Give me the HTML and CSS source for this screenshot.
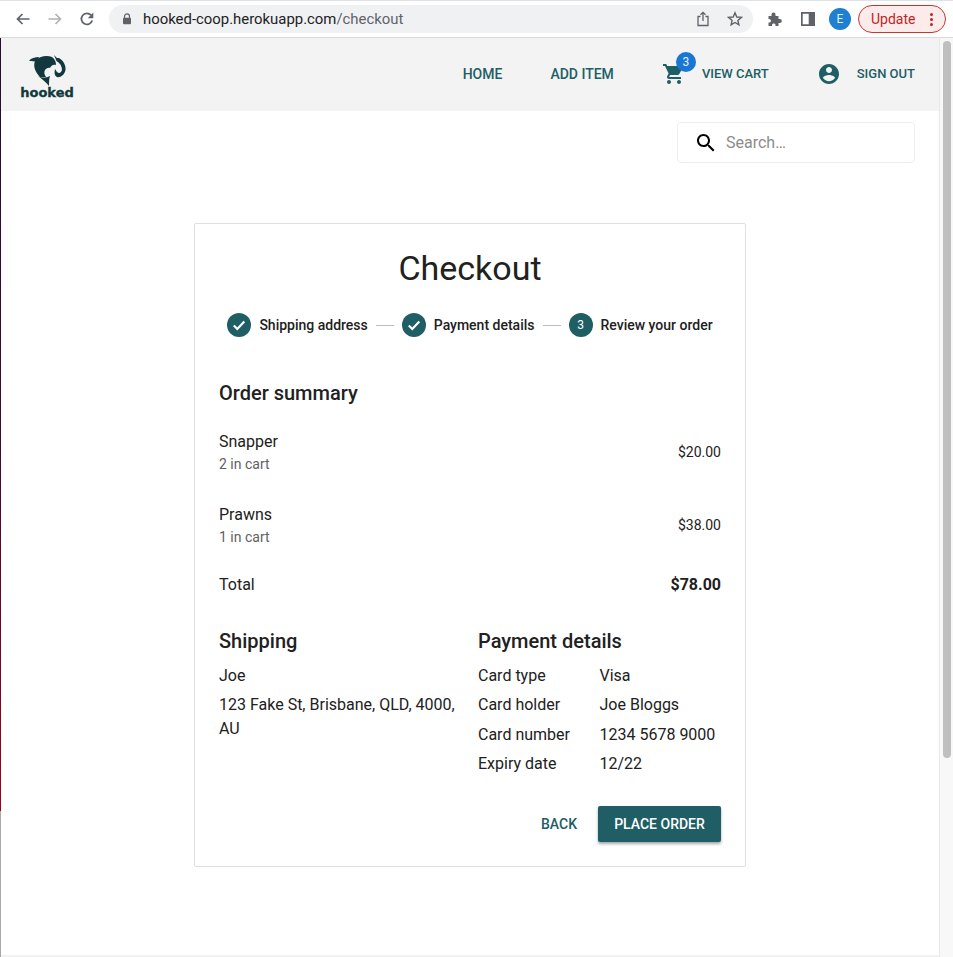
FILE: index.html
```html
<!DOCTYPE html>
<html lang="en">
<head>
<meta charset="utf-8">
<title>Hooked - Checkout</title>
<link rel="stylesheet" href="styles.css">
</head>
<body>
<div class="browser-bar">
  <div class="nav-icons">
    <svg class="b-icon" viewBox="0 0 16 16"><path d="M14.5 8H2.500M7.500 3 2.500 8l5 5" fill="none" stroke="#5f6368" stroke-width="1.700"/></svg>
    <svg class="b-icon" viewBox="0 0 16 16"><path d="M1.500 8h12M8.500 3l5 5-5 5" fill="none" stroke="#b1b3b6" stroke-width="1.700"/></svg>
    <svg class="b-icon" viewBox="0 0 16 16"><path d="M13.200 9.500A5.500 5.500 0 1 1 12 4.200" fill="none" stroke="#5f6368" stroke-width="1.800"/><path d="M14.300 1.600v5.600H8.700z" fill="#5f6368"/></svg>
  </div>
  <div class="omnibox">
    <svg class="lock" viewBox="0 0 10 12"><path d="M2.500 5V3.400a2.500 2.500 0 0 1 5 0V5" fill="none" stroke="#5f6368" stroke-width="1.200"/><rect x="1" y="4.800" width="8" height="6.400" rx="1" fill="#5f6368"/></svg>
    <span class="url">hooked-coop.herokuapp.com<span class="url-path">/checkout</span></span>
    <svg class="share" viewBox="0 0 14 16"><path d="M4.500 5.500H2v9h10v-9H9.500M7 10V1.500M4.500 3.800 7 1.300l2.500 2.500" fill="none" stroke="#5f6368" stroke-width="1.300"/></svg>
    <svg class="star" viewBox="0 0 16 16"><path d="m8 1.800 1.800 4.200 4.600.4-3.500 3 1 4.500L8 11.500l-3.900 2.400 1-4.500-3.500-3 4.600-.4z" fill="none" stroke="#5f6368" stroke-width="1.400"/></svg>
  </div>
  <div class="ext-icons">
    <svg class="puzzle" viewBox="0 0 16 16"><path d="M1.500 5h3V3.500a2 2 0 0 1 4 0V5h3v3h1.300a2 2 0 0 1 0 4H11.500v3h-3v-1.200a1.800 1.800 0 0 0-3.500 0V15H1.500v-3.400h1a1.900 1.900 0 0 0 0-3.700h-1z" fill="#5f6368"/></svg>
    <svg class="panel" viewBox="0 0 14 14"><path fill-rule="evenodd" d="M0 0h14v14H0zM1.700 1.700v10.600h6V1.700z" fill="#5f6368"/></svg>
    <span class="avatar">E</span>
    <span class="update">Update<span class="update-dots"><i></i><i></i><i></i></span></span>
  </div>
</div>
<div class="viewport">
  <div class="desktop-edge"></div>
  <div class="page">
    <header class="app-header">
      <a class="logo">
        <svg class="logo-mark" viewBox="0 0 37 31"><path d="M0 6C2 3 6 2 10 2L8 7C5 6 3 6 0 6Z" fill="#12383e"/><path d="M6 6C10 1 18 0 23 2 26 4 27 7 27 10 24 9 22 11 21 13 19 12 17 14 16 15 15 17 15 19 17 22L11 22C6 17 4 11 6 6Z" fill="#12383e"/><path d="M9 21C13 23 17 23 21 21 20 24 20 27 20 31 17 27 13 24 9 21Z" fill="#12383e"/><path d="M25 0 28 3 30 3C35 6 37 11 36.500 15 35.500 20 31 23 28 22 26 21 25 19 26 14L28 17C30 19 32 18 33 15 33 11 31 8 27.500 6Z" fill="#12383e"/></svg>
        <span class="logo-text">hooked</span>
      </a>
      <nav class="nav">
        <a class="nav-link">Home</a>
        <a class="nav-link">Add item</a>
        <a class="nav-action cart">
          <span class="cart-wrap">
            <svg class="nav-icon" viewBox="0 0 24 24"><path fill="#205e66" d="M7 18c-1.100 0-1.990.900-1.990 2S5.900 22 7 22s2-.900 2-2-.900-2-2-2zM1 2v2h2l3.600 7.590-1.350 2.450c-.160.280-.250.610-.250.960 0 1.100.900 2 2 2h12v-2H7.420c-.140 0-.250-.110-.250-.250l.030-.120.900-1.630h7.450c.750 0 1.410-.410 1.750-1.030l3.580-6.490c.080-.140.120-.310.120-.480 0-.550-.450-1-1-1H5.210l-.940-2H1zm16 16c-1.100 0-1.990.900-1.990 2s.890 2 1.990 2 2-.900 2-2-.900-2-2-2z"/></svg>
            <span class="badge">3</span>
          </span>
          <span class="nav-small">View cart</span>
        </a>
        <a class="nav-action account">
          <svg class="nav-icon" viewBox="0 0 24 24"><path fill="#205e66" d="M12 2C6.480 2 2 6.480 2 12s4.480 10 10 10 10-4.480 10-10S17.520 2 12 2zm0 3c1.660 0 3 1.340 3 3s-1.340 3-3 3-3-1.340-3-3 1.340-3 3-3zm0 14.200c-2.500 0-4.710-1.280-6-3.220.030-1.990 4-3.080 6-3.080 1.990 0 5.970 1.090 6 3.080-1.290 1.940-3.500 3.220-6 3.220z"/></svg>
          <span class="nav-small">Sign out</span>
        </a>
      </nav>
    </header>
    <div class="search-row">
      <div class="search">
        <svg class="search-icon" viewBox="0 0 24 24"><path fill="#000" d="M15.500 14h-.790l-.280-.270C15.410 12.590 16 11.110 16 9.500 16 5.910 13.090 3 9.500 3S3 5.910 3 9.500 5.910 16 9.500 16c1.610 0 3.090-.590 4.230-1.570l.270.280v.790l5 4.990L20.490 19l-4.990-5zm-6 0C7.010 14 5 11.990 5 9.500S7.010 5 9.500 5 14 7.010 14 9.500 11.990 14 9.500 14z"/></svg>
        <span class="search-text">Search…</span>
      </div>
    </div>
    <main class="card">
      <h1 class="title">Checkout</h1>
      <ol class="stepper">
        <li class="step">
          <svg class="step-check" viewBox="0 0 24 24"><circle cx="12" cy="12" r="12" fill="#205e66"/><path d="m6.800 12.500 3.500 3.500 7-7.400" fill="none" stroke="#fff" stroke-width="2.200"/></svg>
          <span>Shipping address</span>
        </li>
        <li class="connector"></li>
        <li class="step">
          <svg class="step-check" viewBox="0 0 24 24"><circle cx="12" cy="12" r="12" fill="#205e66"/><path d="m6.800 12.500 3.500 3.500 7-7.400" fill="none" stroke="#fff" stroke-width="2.200"/></svg>
          <span>Payment details</span>
        </li>
        <li class="connector"></li>
        <li class="step">
          <span class="step-num">3</span>
          <span>Review your order</span>
        </li>
      </ol>
      <h2 class="heading summary-heading">Order summary</h2>
      <div class="item">
        <div><div class="item-name">Snapper</div><div class="item-qty">2 in cart</div></div>
        <div class="item-price">$20.00</div>
      </div>
      <div class="item">
        <div><div class="item-name">Prawns</div><div class="item-qty">1 in cart</div></div>
        <div class="item-price">$38.00</div>
      </div>
      <div class="total"><span>Total</span><strong>$78.00</strong></div>
      <div class="details">
        <section>
          <h2 class="heading">Shipping</h2>
          <p class="line">Joe</p>
          <p class="line">123 Fake St, Brisbane, QLD, 4000, AU</p>
        </section>
        <section>
          <h2 class="heading">Payment details</h2>
          <dl class="pay">
            <dt>Card type</dt><dd>Visa</dd>
            <dt>Card holder</dt><dd>Joe Bloggs</dd>
            <dt>Card number</dt><dd>1234 5678 9000</dd>
            <dt>Expiry date</dt><dd>12/22</dd>
          </dl>
        </section>
      </div>
      <div class="actions">
        <a class="btn-text">Back</a>
        <a class="btn-primary">Place order</a>
      </div>
    </main>
  </div>
  <div class="scrollbar"><div class="thumb"></div></div>
</div>
</body>
</html>
```
FILE: styles.css
```css
* { box-sizing: border-box; }
html, body { margin: 0; height: 957px; overflow: hidden; }
body {
  font-family: Roboto, "Liberation Sans", sans-serif;
  color: #212121;
  background: #fff;
  display: flex;
  flex-direction: column;
}
.browser-bar {
  height: 38px;
  flex: none;
  display: flex;
  align-items: center;
  padding: 0 0 0 15px;
  border-top: 1px solid #dee1e6;
  border-bottom: 1px solid #d9dadc;
  background: #fff;
}
.nav-icons { display: flex; gap: 16px; }
.b-icon { width: 16px; height: 16px; display: block; }
.omnibox {
  width: 644px;
  height: 28px;
  margin-left: 14px;
  border-radius: 14px;
  background: #f0f1f3;
  display: flex;
  align-items: center;
  padding-left: 13px;
}
.lock { width: 10px; height: 12px; }
.url { margin-left: 11px; font-size: 14.900px; color: #202124; flex: 1; }
.url-path { color: #5f6368; }
.share { width: 14px; height: 16px; margin-right: 17px; }
.star { width: 16px; height: 16px; margin-right: 10px; }
.ext-icons { display: flex; align-items: center; margin-left: 14px; }
.puzzle { width: 16px; height: 16px; }
.panel { width: 14px; height: 14px; margin-left: 18px; }
.avatar {
  width: 22px; height: 22px; margin-left: 14px; border-radius: 50%;
  background: #1f7fd0; color: #dfefff; font-size: 12px;
  display: flex; align-items: center; justify-content: center;
}
.update {
  width: 88px; height: 28px; margin-left: 7px; border: 1px solid #c5362c; border-radius: 14px;
  background: #fbeceb; color: #c5221f; font-size: 14px;
  display: flex; align-items: center; padding-left: 12px;
}
.update-dots { display: flex; flex-direction: column; gap: 2px; margin-left: 15px; }
.update-dots i { width: 3px; height: 3px; border-radius: 50%; background: #c5221f; display: block; }
.viewport { flex: 1; display: flex; min-height: 0; }
.desktop-edge {
  width: 1px;
  flex: none;
  background: linear-gradient(#2a0a30 0, #3f0a30 400px, #a00020 773px, #a8a8a8 773px);
}
.page { flex: 1; min-width: 0; border-bottom: 2px solid #f2f2f2; }
.app-header {
  height: 73px;
  background: #f3f3f3;
  display: flex;
  align-items: center;
  justify-content: space-between;
  padding: 0 24px 2px 20px;
}
.logo {
  display: flex; flex-direction: column; align-items: center; width: 52px;
  align-self: flex-start; padding-top: 17px;
}
.logo-mark { width: 37px; height: 31px; display: block; }
.logo-text {
  font-family: "DejaVu Sans", sans-serif; font-weight: 700; font-size: 13px;
  line-height: 13px; color: #12383e; -webkit-text-stroke: .3px #12383e;
}
.nav { display: flex; align-items: center; }
.nav-link, .nav-small, .btn-text, .btn-primary { text-transform: uppercase; }
.nav-link { color: #205e66; font-size: 14px; font-weight: 500; margin-right: 48px; }
.nav-action { display: flex; align-items: center; color: #205e66; }
.cart { margin-right: 48px; }
.cart-wrap { position: relative; display: block; width: 24px; height: 24px; }
.nav-icon { display: block; width: 24px; height: 24px; }
.nav-small { font-size: 13px; font-weight: 500; margin-left: 16px; }
.badge {
  position: absolute; top: -10px; right: -10px;
  width: 20px; height: 20px; border-radius: 50%;
  background: #1976d2; color: #e3f0fb; font-size: 12px;
  display: flex; align-items: center; justify-content: center;
}
.search-row { display: flex; justify-content: flex-end; padding: 11px 24px 0 0; }
.search {
  width: 238px; height: 41px; border: 1px solid #eeeeee; border-radius: 4px;
  display: flex; align-items: center; padding-left: 16px;
}
.search-icon { width: 24px; height: 24px; }
.search-text { margin-left: 8px; font-size: 16px; color: #8c8c8c; }
.card {
  width: 552px; height: 644px; margin: 60px 0 0 193px;
  border: 1px solid #e0e0e0; border-radius: 2px; padding: 24px;
}
.title { margin: 0; font-size: 34px; font-weight: 400; line-height: 40px; text-align: center; }
.stepper {
  list-style: none; margin: 25px 0 0; padding: 0; display: flex; align-items: center;
  justify-content: center; height: 24px;
}
.step { display: flex; align-items: center; gap: 8px; font-size: 14px; font-weight: 500; }
.step-check, .step-num { width: 24px; height: 24px; display: block; flex: none; }
.step-num {
  border-radius: 50%; background: #205e66; color: #fff; font-size: 12px; font-weight: 400;
  line-height: 24px; text-align: center;
}
.connector { width: 18px; height: 1px; background: #bdbdbd; margin: 0 8px; }
.heading { margin: 0; font-size: 20px; font-weight: 500; line-height: 30px; }
.summary-heading { margin-top: 41px; margin-bottom: 8px; }
.item { display: flex; justify-content: space-between; align-items: center; height: 73px; }
.item-name { font-size: 16px; line-height: 24px; }
.item-qty { font-size: 14px; line-height: 21px; color: #616161; }
.item-price { font-size: 14px; padding-bottom: 2px; }
.total {
  display: flex; justify-content: space-between; align-items: center;
  font-size: 16px; line-height: 24px; height: 24px; margin-top: 11px;
}
.total strong { font-weight: 700; }
.details { display: grid; grid-template-columns: 1fr 1fr; column-gap: 16px; margin-top: 29px; }
.details .heading { margin-bottom: 7.500px; }
.line { margin: 0 0 5.500px; font-size: 16px; line-height: 24px; }
.pay { margin: 0; display: grid; grid-template-columns: 121.500px 1fr; row-gap: 5.500px; font-size: 16px; line-height: 24px; }
.pay dt, .pay dd { margin: 0; }
.actions { display: flex; justify-content: flex-end; align-items: center; margin-top: 29.500px; }
.btn-text { color: #205e66; font-size: 14px; font-weight: 500; margin-right: 21px; }
.btn-primary {
  width: 123px; height: 36px; border-radius: 2px; background: #205e66; color: #fff;
  font-size: 14px; font-weight: 500; display: flex; align-items: center; justify-content: center;
  box-shadow: 0 2px 3px rgba(0,0,0,.35);
}
.scrollbar { width: 14px; flex: none; background: #f8f8f8; border-left: 1px solid #e8e8e8; padding: 3px 2px 0 3px; }
.thumb { width: 8px; height: 717px; border-radius: 4px; background: #bfbfbf; }
```
